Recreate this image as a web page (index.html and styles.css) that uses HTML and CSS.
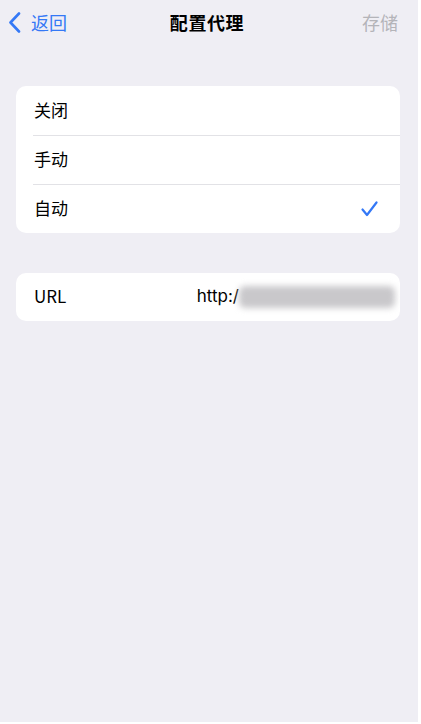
FILE: index.html
```html
<!DOCTYPE html>
<html lang="zh">
<head>
<meta charset="utf-8">
<link rel="stylesheet" href="styles.css">
</head>
<body>
<div class="screen">
  <header class="nav">
    <div class="back">
      <svg class="chev" width="13" height="21" viewBox="0 0 13 21"><path d="M11 1.5 L2.5 10.5 L11 19.5" fill="none" stroke="#3478f6" stroke-width="2.6" stroke-linecap="round" stroke-linejoin="round"/></svg>
      <span>返回</span>
    </div>
    <div class="title">配置代理</div>
    <div class="save">存储</div>
  </header>

  <section class="card">
    <div class="row"><span class="label">关闭</span></div>
    <div class="row"><span class="label">手动</span></div>
    <div class="row"><span class="label">自动</span>
      <svg class="check" width="17" height="16" viewBox="0 0 17 16"><path d="M1.5 8.5 L6 14 L15.5 1.5" fill="none" stroke="#3478f6" stroke-width="2.2" stroke-linecap="round" stroke-linejoin="round"/></svg>
    </div>
  </section>

  <section class="card">
    <div class="row url-row">
      <span class="label">URL</span>
      <span class="value">http:/<span class="blur"></span></span>
    </div>
  </section>
</div>
</body>
</html>
```
FILE: styles.css
```css
* { box-sizing: border-box; }
html, body { margin: 0; padding: 0; background: #ffffff; }
body {
  font-family: "Noto Sans CJK SC", "Inter", "Noto Sans", sans-serif;
  color: #000;
}
.screen {
  width: 418px;
  height: 722px;
  background: #efeef4;
  padding: 0 18px 0 16px;
  overflow: hidden;
}
.nav {
  height: 44px;
  display: grid;
  grid-template-columns: 1fr auto 1fr;
  align-items: center;
  margin: 0 -18px 0 -16px;
  padding: 0 20px 0 8px;
}
.back {
  display: flex;
  align-items: center;
  gap: 10px;
  color: #3478f6;
  font-size: 18px;
}
.chev { margin-top: 1px; }
.title {
  font-size: 18px;
  font-weight: 700;
  letter-spacing: 0.6px;
  margin-left: 8px;
}
.save {
  justify-self: end;
  color: #b4b4b9;
  font-size: 18px;
}
.card {
  background: #fff;
  border-radius: 10px;
  margin-top: 42px;
  overflow: hidden;
}
.card + .card { margin-top: 40px; }
.row {
  height: 49px;
  display: flex;
  align-items: center;
  justify-content: space-between;
  padding: 0 22px 3px 18px;
  position: relative;
  font-size: 17px;
}
.row + .row::before {
  content: "";
  position: absolute;
  top: 0;
  left: 17px;
  right: 0;
  height: 1px;
  background: #e2e2e6;
}
.check { margin-top: 3px; }
.url-row { height: 48px; padding-right: 5px; }
.value {
  display: flex;
  align-items: center;
  font-family: "Inter", "Noto Sans", sans-serif;
}
.blur {
  display: inline-block;
  width: 156px;
  height: 22px;
  margin-left: 0;
  margin-top: 3px;
  background: #c9c8cb;
  border-radius: 6px;
  filter: blur(3px);
}
```
